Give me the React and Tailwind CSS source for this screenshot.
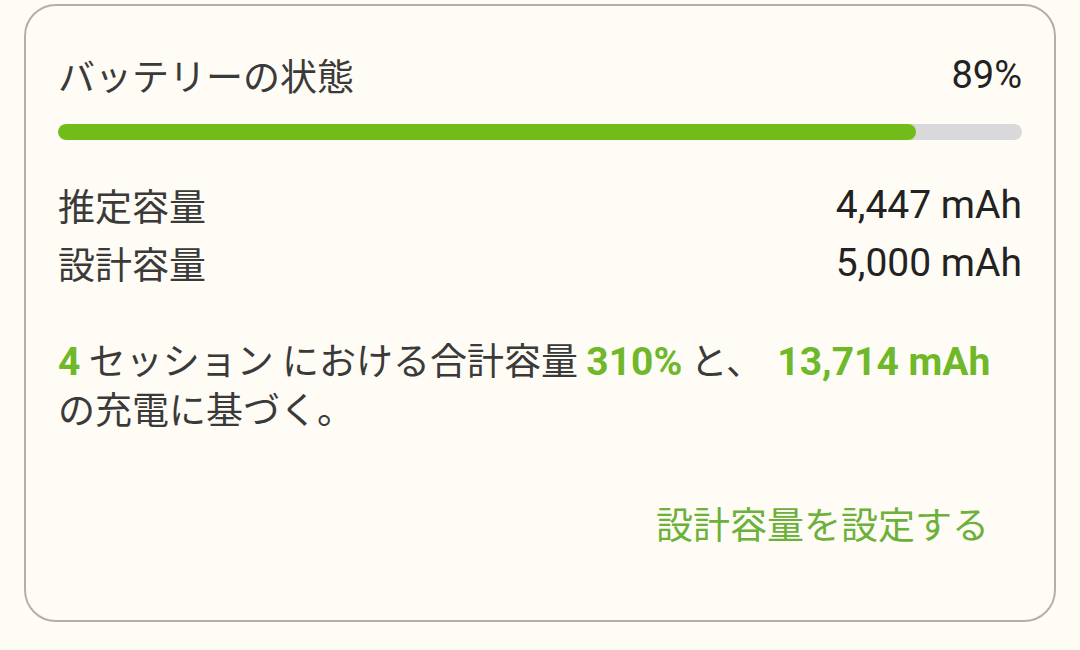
export default function App() {
  const health = 89;
  return (
    <div
      className="w-[1080px] h-[650px] bg-[#fffcf5] pt-[4px] px-[24px]"
      style={{ fontFamily: '"Noto Sans CJK JP", "Noto Sans", sans-serif' }}
    >
      <div className="h-[618px] rounded-[32px] border-2 border-[#b3b0aa] px-[32px] pt-[47px] text-[#3a3a3a]">
        {/* Header */}
        <div className="flex items-center justify-between h-[44px] text-[37px] leading-none">
          <span>バッテリーの状態</span>
          <span className="font-['Roboto'] text-[38px] text-[#222]">{health}%</span>
        </div>

        {/* Bar */}
        <div className="mt-[27px] h-[16px] rounded-full bg-[#d9d9dc] overflow-hidden">
          <div className="h-full rounded-full bg-[#72bc1a]" style={{ width: `${health}%` }} />
        </div>

        {/* Capacity rows */}
        <div className="mt-[43px] flex flex-col gap-[14px] text-[37px] leading-[44px]">
          <div className="flex justify-between">
            <span>推定容量</span>
            <span className="font-['Roboto'] text-[39px] text-[#222]">4,447 mAh</span>
          </div>
          <div className="flex justify-between">
            <span>設計容量</span>
            <span className="font-['Roboto'] text-[39px] text-[#222]">5,000 mAh</span>
          </div>
        </div>

        <p className="mt-[51px] text-[37px] leading-[46px]">
          <b className="font-['Roboto'] text-[39px] font-bold text-[#6fb82a]">4</b> セッション における合計容量{" "}
          <b className="font-['Roboto'] text-[39px] font-bold text-[#6fb82a]">310%</b> と、{" "}
          <b className="ml-[6px] font-['Roboto'] text-[39px] font-bold text-[#6fb82a]">13,714 mAh</b>
          <br />
          の充電に基づく。
        </p>

        <div className="mt-[74px] flex justify-end pr-[33px]">
          <span className="text-[37px] leading-none text-[#6bb13a]">設計容量を設定する</span>
        </div>
      </div>
    </div>
  );
}
